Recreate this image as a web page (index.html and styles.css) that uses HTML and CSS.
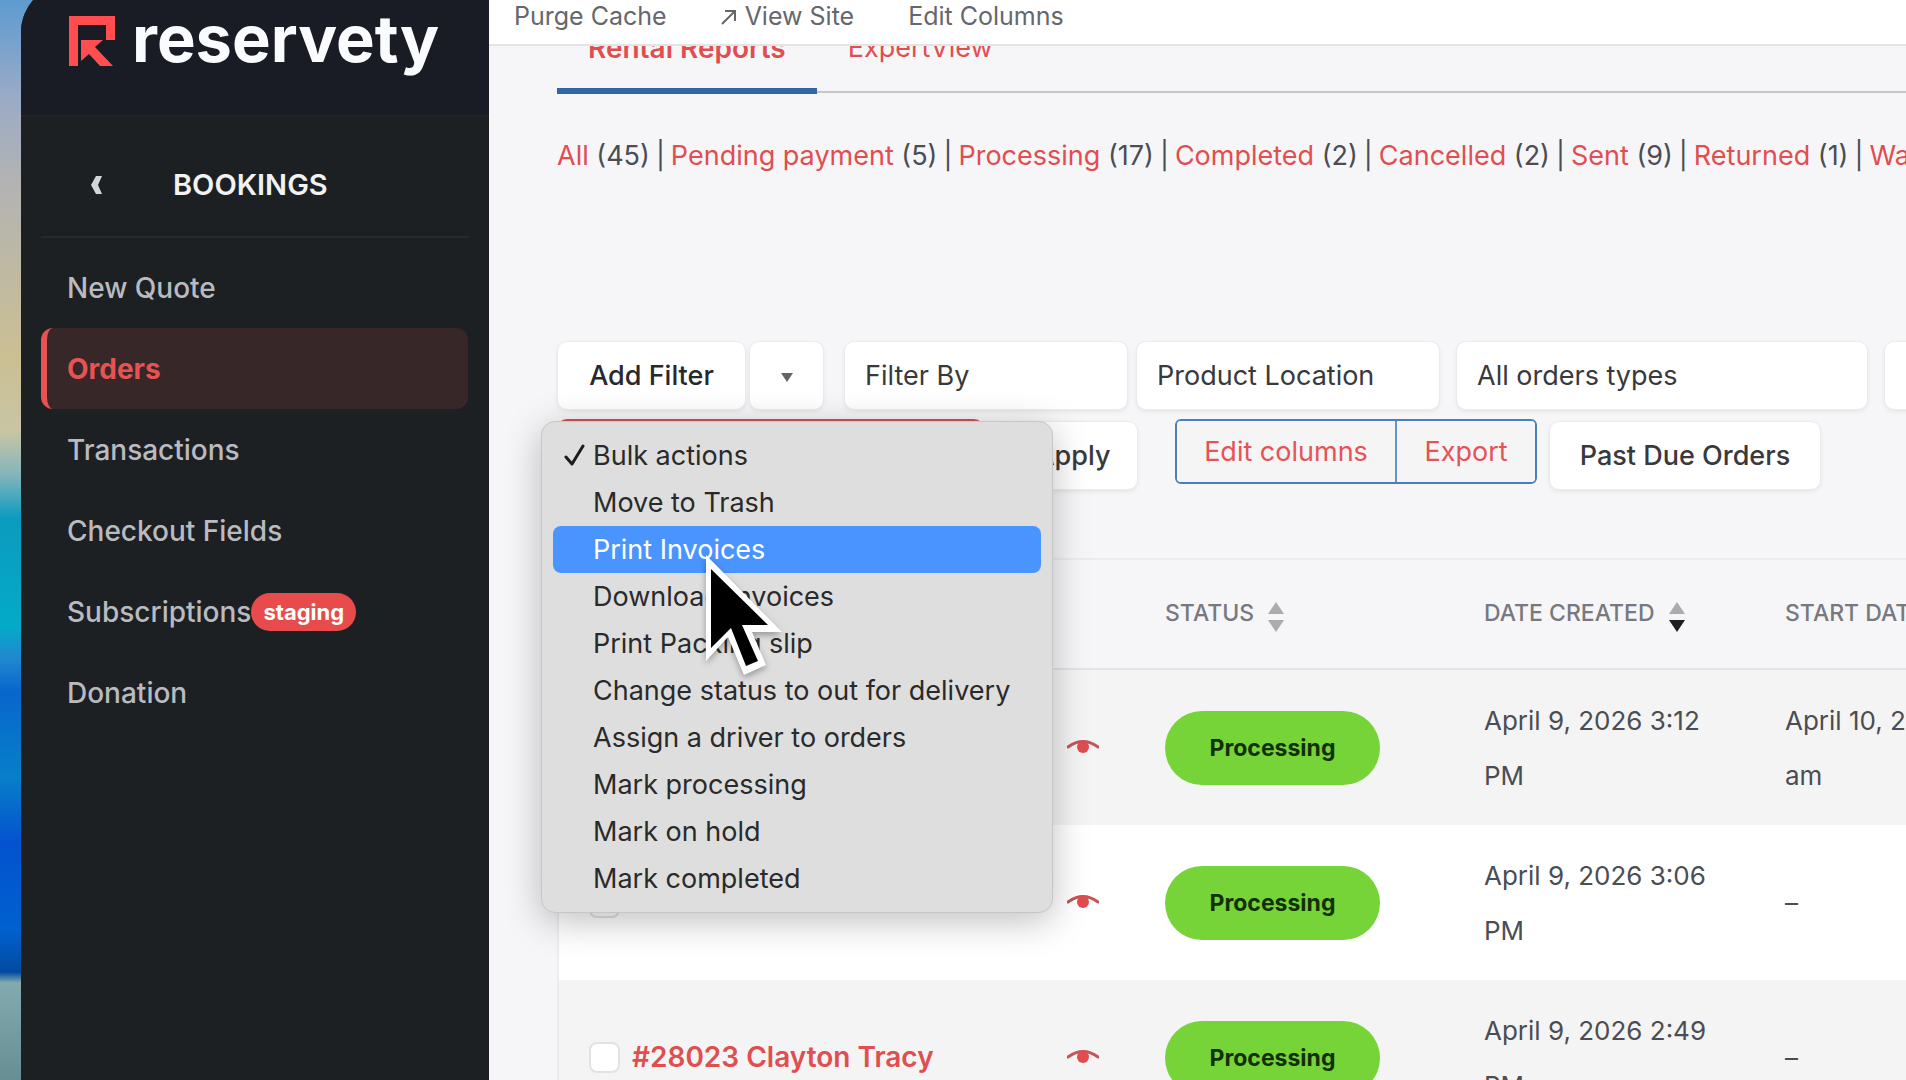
FILE: index.html
```html
<!DOCTYPE html>
<html lang="en">
<head>
<meta charset="utf-8">
<title>Orders – reservety</title>
<link rel="stylesheet" href="styles.css">
</head>
<body>
<div class="desktop">
  <div class="wallpaper"></div>
  <aside class="sidebar">
    <header class="brand">
      <svg class="brand-mark" viewBox="0 0 47 50" aria-hidden="true">
        <path fill="#ff4d50" d="M0 0h46v24h-9V9H9v41H0z"/>
        <path fill="#ff4d50" d="M12 24h22l-8 7 18 19H31L20 38l-8 7z"/>
      </svg>
      <span class="brand-name">reservety</span>
    </header>
    <div class="section">
      <button class="back" aria-label="Back">
        <svg viewBox="0 0 12 18" width="12" height="18" aria-hidden="true"><path fill="#d3d5d7" d="M5 0h6L7 9l4 9H5L0 9z"/></svg>
      </button>
      <h2 class="section-title">BOOKINGS</h2>
    </div>
    <nav class="menu">
      <a href="#quote">New Quote</a>
      <a href="#orders" class="active">Orders</a>
      <a href="#transactions">Transactions</a>
      <a href="#checkout">Checkout Fields</a>
      <a href="#subscriptions">Subscriptions<span class="badge">staging</span></a>
      <a href="#donation">Donation</a>
    </nav>
  </aside>

  <main class="main">
    <div class="topbar">
      <a href="#purge">Purge Cache</a>
      <a href="#site" class="site"><svg viewBox="0 0 16 16" width="16" height="16" aria-hidden="true"><path d="M1 15 14 2M4 2h10v10" fill="none" stroke="currentColor" stroke-width="2"/></svg>View Site</a>
      <a href="#columns">Edit Columns</a>
    </div>
    <div class="content">
      <nav class="tabs">
        <a href="#reports" class="current">Rental Reports</a>
        <a href="#expert">ExpertView</a>
      </nav>
      <div class="views">
        <span><a href="#all">All</a> (45)</span><span>|</span>
        <span><a href="#pending">Pending payment</a> (5)</span><span>|</span>
        <span><a href="#processing">Processing</a> (17)</span><span>|</span>
        <span><a href="#completed">Completed</a> (2)</span><span>|</span>
        <span><a href="#cancelled">Cancelled</a> (2)</span><span>|</span>
        <span><a href="#sent">Sent</a> (9)</span><span>|</span>
        <span><a href="#returned">Returned</a> (1)</span><span>|</span>
        <span><a href="#waiting">Waiting</a></span>
      </div>
      <div class="filters">
        <button class="control add">Add Filter</button>
        <button class="control caret" aria-label="More filters"><span class="down"></span></button>
        <select class="control by" aria-label="Filter by"><option>Filter By</option></select>
        <select class="control location" aria-label="Product location"><option>Product Location</option></select>
        <select class="control types" aria-label="Order types"><option>All orders types</option></select>
        <select class="control more" aria-label="Dates"><option></option></select>
      </div>
      <div class="actions">
        <div class="bulk">
          <select class="control bulk-select" aria-label="Bulk actions"><option>Bulk actions</option></select>
          <div class="popup" role="listbox" aria-label="Bulk actions">
            <button role="option" aria-selected="true"><svg class="tick" viewBox="0 0 22 24" aria-hidden="true"><path d="M2 14l6 7L19 3" fill="none" stroke="#1c1c1c" stroke-width="3" stroke-linecap="round" stroke-linejoin="round"/></svg>Bulk actions</button>
            <button role="option">Move to Trash</button>
            <button role="option" class="hover">Print Invoices</button>
            <button role="option">Download Invoices</button>
            <button role="option">Print Packing slip</button>
            <button role="option">Change status to out for delivery</button>
            <button role="option">Assign a driver to orders</button>
            <button role="option">Mark processing</button>
            <button role="option">Mark on hold</button>
            <button role="option">Mark completed</button>
          </div>
        </div>
        <button class="control apply">Apply</button>
        <div class="group">
          <button class="columns">Edit columns</button>
          <button class="export">Export</button>
        </div>
        <button class="control due">Past Due Orders</button>
      </div>
      <table class="orders">
        <colgroup><col class="c-order"><col class="c-status"><col class="c-date"><col class="c-date"></colgroup>
        <thead>
          <tr>
            <th></th>
            <th><span class="sort">STATUS<span class="arrows"><i class="up"></i><i class="dn"></i></span></span></th>
            <th><span class="sort">DATE CREATED<span class="arrows desc"><i class="up"></i><i class="dn"></i></span></span></th>
            <th><span class="sort">START DATE</span></th>
          </tr>
        </thead>
        <tbody>
          <tr>
            <td><div class="order"><input type="checkbox" aria-label="Select order"><a class="eye" href="#preview" aria-label="Preview"><svg viewBox="0 0 32 18"><path class="lid" d="M1 8Q16-3 31 8"/><circle cx="16" cy="8" r="6"/></svg></a></div></td>
            <td><span class="pill">Processing</span></td>
            <td>April 9, 2026 3:12 PM</td>
            <td>April 10, 2026 9:00 am</td>
          </tr>
          <tr>
            <td><div class="order"><input type="checkbox" aria-label="Select order"><a class="eye" href="#preview" aria-label="Preview"><svg viewBox="0 0 32 18"><path class="lid" d="M1 8Q16-3 31 8"/><circle cx="16" cy="8" r="6"/></svg></a></div></td>
            <td><span class="pill">Processing</span></td>
            <td>April 9, 2026 3:06 PM</td>
            <td>–</td>
          </tr>
          <tr>
            <td><div class="order"><input type="checkbox" id="o28023"><label for="o28023"><a href="#28023">#28023 Clayton Tracy</a></label><a class="eye" href="#preview" aria-label="Preview"><svg viewBox="0 0 32 18"><path class="lid" d="M1 8Q16-3 31 8"/><circle cx="16" cy="8" r="6"/></svg></a></div></td>
            <td><span class="pill">Processing</span></td>
            <td>April 9, 2026 2:49 PM</td>
            <td>–</td>
          </tr>
        </tbody>
      </table>
    </div>
  </main>
  <svg class="pointer" viewBox="0 0 84 128" aria-hidden="true">
    <path d="M4 4v106l22-24 16 38 22-10-14-33h30z" fill="#fff"/>
    <path d="M9 18v79l20-20 15 38 12-5-16-36h26z" fill="#000"/>
  </svg>
</div>
</body>
</html>
```
FILE: styles.css
```css
* { box-sizing: border-box; }

body {
  margin: 0;
  font-family: Inter, "Liberation Sans", sans-serif;
  font-size: 27px;
  color: #4b4d52;
  background: #f6f6f9;
}

a { color: inherit; text-decoration: none; }
button, select { font: inherit; color: inherit; }

.desktop {
  position: relative;
  display: flex;
  height: 100vh;
  overflow: hidden;
  background: linear-gradient(#5d9bd0 0, #9aabc6 9%, #b3b3b3 17%, #cbbf93 33%, #c8c5a4 40%, #83b5bb 44%, #0b9bbf 48%, #04aac8 58%, #2088cf 61%, #0866cc 64%, #077fc9 72%, #0452cf 78%, #0061cf 86%, #024a9f 90%, #83aaaf 91%, #678e92 100%);
}

.wallpaper { flex: 0 0 21px; }

/* Sidebar */
.sidebar {
  flex: 0 0 468px;
  margin-top: -16px;
  border-top-left-radius: 48px;
  background: #1d2023;
  overflow: hidden;
}

.brand {
  display: flex;
  align-items: center;
  gap: 16px;
  height: 133px;
  padding: 0 48px 17px;
  background: #191c24;
  border-bottom: 2px solid #20252a;
}

.brand-mark { width: 47px; height: 50px; flex: none; }
.brand-name { padding-bottom: 4px; font-size: 65px; font-weight: 700; line-height: 64px; color: #fafbff; }

.section {
  display: flex;
  align-items: center;
  height: 121px;
  margin: 0 20px;
  padding: 16px 0 0 50px;
  border-bottom: 2px solid #272a2d;
}

.back { display: flex; padding: 0; width: 82px; border: 0; background: none; }
.section-title { margin: 0; font-size: 29px; font-weight: 600; color: #f0f2f4; }

.menu { display: flex; flex-direction: column; padding: 9px 21px 9px 20px; }

.menu a {
  display: flex;
  align-items: center;
  height: 81px;
  padding-left: 20px;
  border-left: 6px solid transparent;
  border-radius: 12px;
  font-size: 28px;
  font-weight: 500;
  color: #b9bbc0;
}

.menu .active { background: #372728; border-left-color: #e55353; color: #e55353; font-weight: 700; }

.badge {
  padding: 0 12px;
  border-radius: 20px;
  background: #e84b4b;
  color: #fff;
  font-size: 22px;
  font-weight: 700;
  line-height: 38px;
}

/* Main area */
.main { flex: 1; min-width: 0; overflow: hidden; background: #f6f6f9; }

.topbar {
  position: relative;
  z-index: 1;
  display: flex;
  gap: 54px;
  height: 46px;
  padding-left: 25px;
  background: #fff;
  border-bottom: 2px solid #e4e4e6;
  font-size: 25px;
  line-height: 33px;
  color: #65676d;
}

.site { display: flex; align-items: center; gap: 8px; height: 33px; }
.content { padding-left: 68px; }

.tabs {
  display: flex;
  height: 67px;
  margin-top: -20px;
  border-bottom: 2px solid #c6c7ca;
  font-size: 27px;
  line-height: 44px;
  color: #e04e50;
}

.tabs a { height: 68px; padding: 0 31px; }
.tabs .current { border-bottom: 6px solid #3167a8; font-size: 28px; font-weight: 600; }

.views { display: flex; gap: 6px; padding-top: 47px; line-height: 32px; white-space: nowrap; }
.views a, .order a { color: #e04e50; }

.filters, .actions { display: flex; }
.filters { margin-top: 169px; }

.control {
  flex: none;
  height: 69px;
  padding: 0 20px;
  border: 1px solid #ebebee;
  border-radius: 10px;
  background: #fff;
  box-shadow: 0 2px 4px #00000010;
  color: #38393d;
  appearance: none;
}

.add { width: 189px; padding: 0; color: #27282c; font-weight: 500; }
.caret { width: 75px; margin-left: 3px; padding: 0; }
.down {
  display: inline-block;
  border: 6px solid transparent;
  border-top: 9px solid #636468;
  border-bottom: 0;
  vertical-align: middle;
}
.by { width: 284px; margin-left: 20px; }
.location { width: 304px; margin-left: 8px; }
.types { width: 412px; margin-left: 16px; }
.more { width: 300px; margin-left: 16px; }

.actions { margin-top: 9px; align-items: flex-start; }
.bulk { position: relative; flex: none; width: 427px; }
.bulk-select { width: 100%; border: 3px solid #d05355; }
.apply { width: 130px; margin: 2px 0 0 24px; padding: 0; font-weight: 500; }

.group { display: flex; flex: none; margin-left: 37px; border: 2px solid #4a80b8; border-radius: 6px; overflow: hidden; }
.group button { height: 61px; padding: 0; border: 0; background: #f5f5f5; color: #e55355; }
.columns { width: 218px; }
.group .export { width: 140px; border-left: 2px solid #5f95c8; }
.due { width: 272px; margin: 2px 0 0 12px; padding: 0; font-weight: 500; }

/* Open bulk action list, drawn over the table */
.popup {
  position: absolute;
  z-index: 2;
  top: 2px;
  left: -16px;
  width: 512px;
  padding: 10px 11px;
  border: 1px solid #c6c6c6;
  border-radius: 14px;
  background: #dedede;
  box-shadow: 0 8px 36px #00000040;
}

.popup button {
  position: relative;
  display: block;
  width: 100%;
  height: 47px;
  padding: 0 0 0 40px;
  border: 0;
  border-radius: 8px;
  background: none;
  color: #2a2a2a;
  text-align: left;
  white-space: nowrap;
}

.popup .hover { background: #4a94ff; color: #fff; }
.tick { position: absolute; left: 11px; top: 11px; width: 22px; height: 24px; }

/* Orders table */
.orders {
  width: 1504px;
  margin-top: 68px;
  table-layout: fixed;
  border-collapse: separate;
  border-spacing: 0;
  border: 2px solid #ececef;
}

.c-order { width: 582px; }
.c-status { width: 319px; }
.c-date { width: 301px; }

.orders th {
  height: 110px;
  padding: 0 24px 2px;
  border-bottom: 2px solid #e4e4e6;
  text-align: left;
  font-size: 23px;
  font-weight: 500;
  color: #77797f;
}

.orders td { height: 155px; padding: 0 24px; font-size: 26px; line-height: 55px; }
.orders tbody tr:nth-child(odd) { background: #f4f4f4; }
.orders tbody tr:nth-child(even) { background: #fff; }

.sort { display: inline-flex; align-items: center; gap: 14px; height: 36px; white-space: nowrap; }
.arrows { display: flex; flex-direction: column; gap: 6px; padding-top: 8px; }
.arrows i { border: 8px solid transparent; }
.arrows .up { border-top: 0; border-bottom: 12px solid #a9abaf; }
.arrows .dn { border-bottom: 0; border-top: 12px solid #a9abaf; }
.desc .dn { border-top-color: #1d1e22; }

.pill {
  display: block;
  width: 215px;
  border-radius: 38px;
  background: #76d438;
  color: #123005;
  font-size: 23px;
  font-weight: 700;
  line-height: 74px;
  text-align: center;
}

.order { display: flex; align-items: center; gap: 12px; padding-left: 6px; }
.order input {
  appearance: none;
  width: 31px;
  height: 31px;
  margin: 0;
  border: 2px solid #e2e2e4;
  border-radius: 8px;
  background: #fff;
}
.order label { font-size: 28px; font-weight: 600; }
.order .eye { display: flex; width: 32px; margin-left: auto; margin-right: 18px; }
.eye svg { width: 32px; height: 18px; fill: #e14c4e; }
.lid { fill: none; stroke: #c55557; stroke-width: 3; stroke-linecap: round; }

.pointer {
  position: absolute;
  z-index: 3;
  left: 702px;
  top: 551px;
  width: 84px;
  height: 128px;
  filter: drop-shadow(0 3px 3px #00000050);
}
```
